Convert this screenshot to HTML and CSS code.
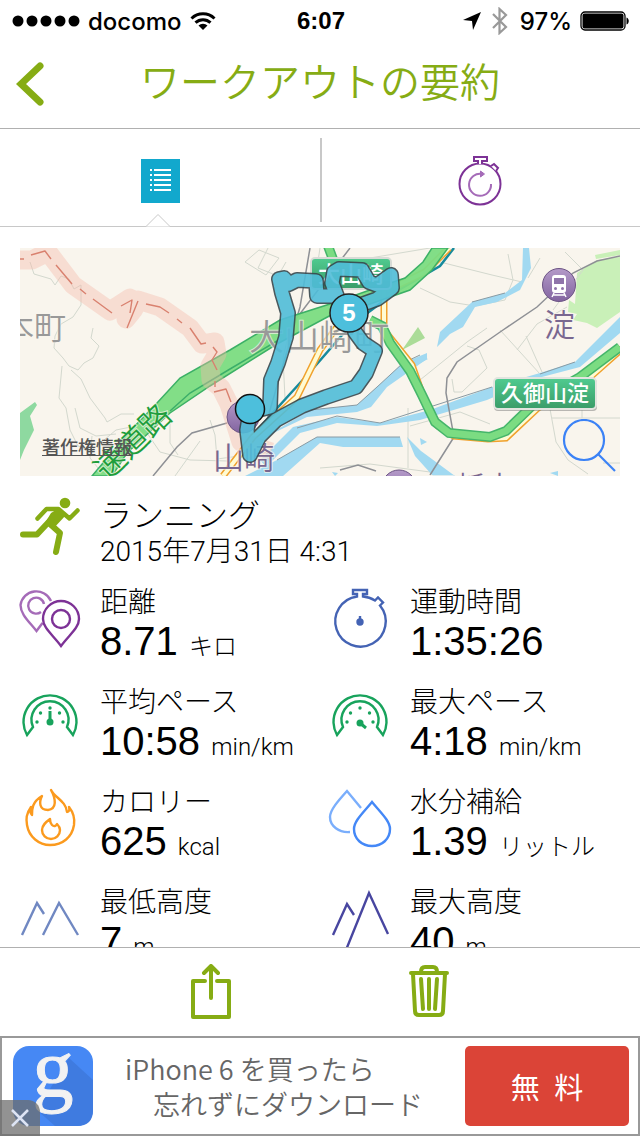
FILE: index.html
```html
<!DOCTYPE html>
<html lang="ja">

<head>
    <meta charset="UTF-8">
    <meta name="viewport" content="width=device-width, initial-scale=1.0">
    <title>ワークアウトの要約</title>
    <link rel="stylesheet" href="styles.css">
</head>

<body>

    <div class="status-bar">
        <div class="status-left">
            <svg width="68" height="12" viewBox="0 0 68 12">
                <circle cx="6" cy="6" r="5.500" /><circle cx="20" cy="6" r="5.500" /><circle cx="34" cy="6" r="5.500" /><circle cx="48" cy="6" r="5.500" /><circle cx="62" cy="6" r="5.500" />
            </svg>
            <span>docomo</span>
            <svg width="26" height="20" viewBox="0 0 26 20" fill="none" stroke="#000" stroke-width="3">
                <path d="M1.500 7.500a16.500 16.500 0 0 1 23 0M5.500 11.700a11 11 0 0 1 15 0" />
                <path d="M13 19l-4.500-4.500a6.500 6.500 0 0 1 9 0z" fill="#000" stroke="none" />
            </svg>
        </div>
        <strong class="status-time">6:07</strong>
        <div class="status-right">
            <svg width="20" height="20" viewBox="0 0 20 20"><path d="M19 1L11 19l-1-9-9-1z" /></svg>
            <svg width="22" height="28" viewBox="-1 0 22 28" fill="none" stroke="#999" stroke-width="2.200"><path d="M2 7l13 13-6.500 6V2L15 8 2 21" /></svg>
            <span>97%</span>
            <svg width="50" height="20" viewBox="0 0 50 20">
                <rect x="1" y="1" width="44" height="18" rx="4" fill="none" stroke="#000" stroke-width="1.300" />
                <rect x="2.500" y="2.500" width="41" height="15" rx="2" />
                <path d="M46.500 6.500c3 1 3 6 0 7z" />
            </svg>
        </div>
    </div>

    <header>
        <button class="back" aria-label="戻る">
            <svg width="28" height="44" viewBox="0 0 28 44" fill="none" stroke="#86ac14" stroke-width="7" stroke-linecap="round"><path d="M24 4L5 22l19 18" stroke-linejoin="miter" /></svg>
        </button>
        <h1>ワークアウトの要約</h1>
    </header>

    <nav>
        <button class="tab active" aria-label="概要">
            <svg width="40" height="44" viewBox="0 0 40 44">
                <rect x="1" y="0" width="39" height="44" fill="#12a8cd" />
                <path d="M10 11h2M10 16h2M10 21h2M10 26h2M10 31h2M14 11h17M14 16h17M14 21h17M14 26h17M14 31h17" stroke="#fff" stroke-width="2.200" />
            </svg>
            <svg class="caret" width="26" height="14" viewBox="0 0 26 14"><path d="M1 13.500L13 1.500l12 12" fill="#fff" stroke="#c8c8c8" /></svg>
        </button>
        <button class="tab" aria-label="ラップ">
            <svg width="44" height="50" viewBox="0 0 44 50" fill="none" stroke="#7d3296" stroke-width="2">
                <circle cx="22" cy="28" r="20.500" />
                <path d="M20 8V5h-4V1h13v4h-5v3M33 10l3-2 4 4-2 3" fill="#fff" />
                <g stroke="#a56bb8"><path d="M33 28a11 11 0 1 1-9-10" /><path d="M22.500 15l4 3-4 3z" fill="#a56bb8" stroke-width="1" /></g>
            </svg>
        </button>
    </nav>

    <main>
        <div class="map">
            <svg viewBox="0 0 600 228" preserveAspectRatio="xMidYMid slice">
                <defs>
                    <linearGradient id="sign" x1="0" y1="0" x2="0" y2="1"><stop offset="0" stop-color="#50cb90" /><stop offset="1" stop-color="#3a9c68" /></linearGradient>
                    <linearGradient id="station" x1="0" y1="0" x2="0" y2="1"><stop offset="0" stop-color="#b49ac8" /><stop offset="1" stop-color="#8264a0" /></linearGradient>
                </defs>
                <rect width="600" height="228" fill="#f9f5ed" />

                <!-- parks -->
                <path d="M557 25l20-13 23-3v55l-23 16-10-5-14-3 4-6-9-2 1-12 6 4z" fill="#c9f0b8" />
                <path d="M575 7l25-5v5l-24 4z" fill="#c9f0b8" />
                <path d="M0 165l15-11 2 3-7 11 4 14-10 20-4 10z" fill="#8ed9a0" />
                <path d="M382 102l16-23 7 11z" fill="#abdc98" />

                <!-- minor roads -->
                <g fill="none" stroke="#d3d8ce">
                    <path d="M10 14l4 12 17 5 4 6 6-9 8 3 5 10 7-4v20l-8 12-12 7-6 12-1 12 9 10 6 8 9 4 6-7 9-5 6-12-8-8 2-10" />
                    <path d="M42 118l-3 32 7 10 4 22 8 16 14 4 24-20 20-4 12 5M51 122l10 9 9 19 15 20 2 4 14-8h13" />
                    <path d="M55 160l5 20 16 8 20-2M72 188l-2 22 8 10M125 182l15 22 30 8 38 1M150 175v20l8 12M155 228l25-35M190 172l5 15 2 24 60-8" />
                    <path d="M225 14l14-12 20 8-13 17zM248 0l-10 20 20 8 8-14M300 0l-3 20 18-4M270 80l-7 30 2 40M350 10l60-10M420 14l52 13 30 7M400 40l30 14 25 4 30-6 8-20-5-26" />
                    <path d="M520 10l-12 20M480 82l40 44M497 102l20-26 30-17M432 131l2 13h8l25-24-8-18-12-4M467 80l-20 14-47 38M506 88l16 36M528 150l8 44 12 18 20 14M532 170h68M583 215h17M562 152v18M388 160v60M390 178l50-14 30 12M545 4l18 18-30 40M300 220l50-4 60 8" />
                </g>

                <!-- rivers -->
                <g fill="#a1d9f1">
                    <path d="M407 105l-24 10-26 24-20 18-47 5-47 28 44-21 50-5 14-5 16-20 40-28z" />
                    <path d="M240 212l33-33 44-10 43 6 50-13 62-23 48-14 35-11 45-45v16l-40 34-42 11-51 22-67 20-43 6-40-3-37 10-34 34z" />
                    <path d="M225 228l32-16 40-23h83l3 10h-60l-23-4-37 33z" />
                    <path d="M387 189l14 14 34 25h-22l-18-20z" />
                    <path d="M503 0h6l2 20-11 22-23 12-22 5-12 20-13 7-13 13 3-15 32-30 33-9 17-13zM400 108l8 3-8 4zM400 190l7 4-6 3zM312 224l6 1-3 3zM530 225l8-2v5z" />
                </g>
                <path d="M277 180l40-12 43 7 112-36M520 126l35-12M452 54l33-9M257 212l40-23h83M400 107l-17 8-26 24-20 18-47 5" fill="none" stroke="#899ba4" />

                <!-- railways -->
                <path d="M600 8l-23 5-24 12-36 34-34 23-46 32-10 16-1 15 8 44-24 38M133 228l24-29 15-14 35-10M290 0l-10 59-35 120M330 0l-57 75M320 222l18-5 18 6" fill="none" stroke="#8e9095" stroke-width="1.500" />

                <!-- highways -->
                <g fill="none">
                    <path d="M434 0l-14 18-43 25-47 35-40 46-50 55-37 46" stroke="#168a9c" stroke-width="2.500" />
                    <path d="M429 0l-24 24-54 26-34 29-17 23-23 47-44 40-30 39" stroke="#f0a12c" stroke-width="7" />
                    <path d="M429 0l-24 24-54 26-34 29-17 23-23 47-44 40-30 39" stroke="#fffbd2" stroke-width="4" />
                    <path d="M364 42v40l28 35 14 40 12 21 16 10 34 3 18-1 32-30 50-29 36-32" stroke="#f0a12c" stroke-width="7" />
                    <path d="M364 42v40l28 35 14 40 12 21 16 10 34 3 18-1 32-30 50-29 36-32" stroke="#fffbd2" stroke-width="4" />
                </g>
                <path d="M72 228L110 183L137 155L160 130L210 102L260 72L313 55L350 42L385 30L403 14L412 0H428L412 22L390 42L350 56L313 66L257 96L190 138L150 165L107 205L92 228z" fill="#7bdc82" fill-opacity=".95" stroke="#3cb066" stroke-width="1.500" />
                <path d="M150 163l20-18 40-24 47-28" fill="none" stroke="#3cae6a" stroke-width="1.500" />
                <path d="M350 72l12 6 8 17 20 28 12 24 13 27 14 11 41 4 16-6 30-29 44-25 40-30M308-2l6 16" fill="none" stroke="#45b56a" stroke-width="10" />
                <path d="M350 72l12 6 8 17 20 28 12 24 13 27 14 11 41 4 16-6 30-29 44-25 40-30M308-2l6 16" fill="none" stroke="#7bdc82" stroke-width="7" />

                <!-- administrative border -->
                <g fill="none" stroke-linejoin="round">
                    <path d="M0 12h12L28 4l25 33 37 26 20-13-4 21 8-10 4-9 22 7 30 21 12 16 13-2 2 12-7 12 1 14 10 8 8 16 12 38 30 10" stroke="#f6b9a9" stroke-opacity=".4" stroke-width="19" />
                    <path d="M0 11h4M11 7l14-4 6 8M36 17l16 19M60 41l6 5M73 51l19 14M101 58l11-6-2 13M118 53l-11 27M126 56l14 3 9 6M157 71l5 4M170 80l11 16 5-1M193 99l4 5-5 8 5 10M195 139v-6M194 144l12-3 5 13" stroke="#d9816f" stroke-width="1.400" />
                </g>

                <!-- place names -->
                <g class="map-label">
                    <text x="-18" y="91" font-size="32" fill="#999">本町</text>
                    <text x="229" y="102" font-size="35" fill="#999">大山崎町</text>
                    <text x="524" y="88" font-size="31" fill="#796790">淀</text>
                    <text x="407" y="250" font-size="29" fill="#796790">三栃木</text>
                    <text x="0" y="0" font-size="31" fill="#1f9e3c" transform="translate(87 234) rotate(-44)">速道路</text>
                </g>

                <g>
                    <circle cx="539" cy="37" r="16.500" fill="url(#station)" stroke="#6c5484" />
                    <rect x="532" y="27" width="14" height="18" rx="3" fill="#fff" />
                    <rect x="534" y="30" width="10" height="6" fill="#8f74aa" />
                    <circle cx="535.500" cy="40.500" r="1.500" fill="#8f74aa" /><circle cx="542.500" cy="40.500" r="1.500" fill="#8f74aa" />
                    <path d="M534 45l-2 4M544 45l2 4M533 47h12" stroke="#fff" stroke-width="1.500" />
                    <circle cx="223" cy="169" r="16" fill="url(#station)" stroke="#6c5484" />
                    <circle cx="379" cy="239" r="17" fill="url(#station)" stroke="#6c5484" />
                </g>
                <text class="map-label" x="193" y="221" font-size="31" fill="#796790">山崎</text>

                <rect x="291" y="10" width="80" height="31" rx="4" fill="url(#sign)" stroke="#d8dbd6" stroke-width="2" />
                <text class="map-label sign" x="298" y="34" font-size="22">大山崎</text>
                <rect x="474" y="131" width="103" height="32" rx="4" fill="#777" opacity=".5" />
                <rect x="474" y="130" width="102" height="31" rx="4" fill="url(#sign)" stroke="#e2e4df" stroke-width="2" />
                <text class="map-label sign" x="481" y="153" font-size="22">久御山淀</text>

                <!-- workout route -->
                <g fill="none" stroke-linecap="round" stroke-linejoin="round" opacity=".9">
                    <path d="M230 207l-3-25 3-18 20-5 1-27 7-17 8-26 2-24-6-20-3-14 5-1 5 6 8-4 19 1 1 15h20l-5-13 2-11 5-3 23 1 7 12 8 3 14-10 1 13-15 11-28 10 6 23 8 11 12 8-9 22-10 14-30 10-24 9-26 14-17 17-9 18" stroke="#38484e" stroke-width="16" />
                    <path d="M230 207l-3-25 3-18 20-5 1-27 7-17 8-26 2-24-6-20-3-14 5-1 5 6 8-4 19 1 1 15h20l-5-13 2-11 5-3 23 1 7 12 8 3 14-10 1 13-15 11-28 10 6 23 8 11 12 8-9 22-10 14-30 10-24 9-26 14-17 17-9 18" stroke="#50bdd9" stroke-width="13" />
                </g>
                <circle cx="230" cy="161" r="14.500" fill="#4dbfdc" stroke="#111" stroke-width="1.500" />
                <circle cx="329" cy="65" r="19" fill="#4dbfdc" stroke="#222" stroke-width="1.500" />
                <text class="marker" x="329" y="73" text-anchor="middle">5</text>
            </svg>
            <a class="legal" href="#">著作権情報</a>
            <button class="zoom" aria-label="地図を拡大">
                <svg width="54" height="54" viewBox="0 0 54 54" fill="none" stroke="#3b82f6" stroke-width="2.200"><circle cx="22" cy="21" r="20" /><path d="M36 35l17 17" /></svg>
            </button>
        </div>

        <section class="summary">
            <svg class="icon" viewBox="0 0 60 60" fill="none" stroke="#86ac14" stroke-width="6" stroke-linecap="round" stroke-linejoin="round">
                <circle cx="45" cy="7" r="5.300" fill="#86ac14" stroke="none" />
                <path d="M17.500 22.500l9-9.500h12l11 9.500 8-8" stroke-width="4.500" />
                <path d="M39 12l7 7-13 14-8-6 6-10z" fill="#86ac14" stroke="none" />
                <path d="M3 38.500h14l14-15M30 28l10 9-4 19" />
            </svg>
            <div>
                <h2>ランニング</h2>
                <p class="date">2015年7月31日 4:31</p>
            </div>
        </section>

        <section class="stats">
            <div class="stat">
                <svg class="icon" viewBox="0 0 60 60" fill="none" stroke="#7d3296">
                    <g stroke="#a56bb8"><path d="M31 13A16 16 0 0 0 0.500 17c0 9 8 16 16 26l6-8" /><path d="M24 16a8 8 0 1 0-3 8" /></g>
                    <path d="M41 58C33 47 23 40 23 31a18 18 0 0 1 36 0c0 9-10 16-18 27z" />
                    <circle cx="41" cy="31" r="9" />
                </svg>
                <div><h3>距離</h3><p class="value">8.71 <small>キロ</small></p></div>
            </div>
            <div class="stat">
                <svg class="icon" viewBox="0 0 60 60" fill="none" stroke="#4463b4">
                    <path d="M27 8.500V6h-4V2h14v4h-4v2.500a25 25 0 0 1 12 4l3-3 5 5-3 3A25.200 25.200 0 1 1 27 8.500z" />
                    <circle cx="30" cy="34" r="2.500" fill="#4463b4" /><path d="M30 34v-6" />
                </svg>
                <div><h3>運動時間</h3><p class="value">1:35:26</p></div>
            </div>
            <div class="stat">
                <svg class="icon" viewBox="0 0 60 60" fill="none" stroke="#18a35c">
                    <path d="M7 47A26.500 26.500 0 1 1 53 47l-6-8A18.500 18.500 0 1 0 13 39z" />
                    <path d="M30 34V23" stroke-width="3" />
                    <g fill="#18a35c" stroke="none"><circle cx="30" cy="34" r="3.500" /><circle cx="17" cy="34" r="1.700" /><circle cx="43" cy="34" r="1.700" /><circle cx="20.500" cy="25" r="1.700" /><circle cx="39.500" cy="25" r="1.700" /><circle cx="30" cy="20" r="1.700" /></g>
                </svg>
                <div><h3>平均ペース</h3><p class="value">10:58 <small>min/km</small></p></div>
            </div>
            <div class="stat">
                <svg class="icon" viewBox="0 0 60 60" fill="none" stroke="#18a35c">
                    <path d="M7 47A26.500 26.500 0 1 1 53 47l-6-8A18.500 18.500 0 1 0 13 39z" />
                    <path d="M30 35l6 5" stroke-width="3" />
                    <g fill="#18a35c" stroke="none"><circle cx="30" cy="35" r="3.500" /><circle cx="17" cy="34" r="1.700" /><circle cx="43" cy="34" r="1.700" /><circle cx="20.500" cy="25" r="1.700" /><circle cx="39.500" cy="25" r="1.700" /><circle cx="30" cy="20" r="1.700" /></g>
                </svg>
                <div><h3>最大ペース</h3><p class="value">4:18 <small>min/km</small></p></div>
            </div>
            <div class="stat">
                <svg class="icon" viewBox="0 0 60 60" fill="none" stroke="#fb9a1e" stroke-linejoin="round">
                    <path d="M11 19C6 26 6 31 7 37c2 12 12 20 23 20 13 0 22-8 24-20 1-7-1-13-5-18 1 3 0 5-2 5-1-11-12-14-16-22 5 9 6 19-3 20-9 0-9-8-6-14-10 6-10 13-10 19-2-2-2-5-1-8z" />
                    <path d="M30 31c-4 3-8 6-8 11a9 9 0 0 0 18 0c0-2-1-4-3-6-1 2-3 3-5 1-2-2-2-4-2-6z" />
                </svg>
                <div><h3>カロリー</h3><p class="value">625 <small>kcal</small></p></div>
            </div>
            <div class="stat">
                <svg class="icon" viewBox="0 0 60 60" fill="none" stroke="#4488f7">
                    <path d="M31 20L17 3C8 13 0 22 0 29c0 9 9 16 20 15" stroke="#7aaefc" />
                    <path d="M42 14c9 11 18 19 18 27 0 10-8 17-18 17s-18-7-18-17c0-8 9-16 18-27z" />
                </svg>
                <div><h3>水分補給</h3><p class="value">1.39 <small>リットル</small></p></div>
            </div>
            <div class="stat">
                <svg class="icon" viewBox="0 0 60 60" fill="none" stroke="#7088c2"><path d="M2 47l15-32 7 11M23 47l16-32 19 32" /></svg>
                <div><h3>最低高度</h3><p class="value">7 <small>m</small></p></div>
            </div>
            <div class="stat">
                <svg class="icon" viewBox="0 0 60 60" fill="none" stroke="#4846a0"><path d="M3 47l14-31 7 11M16 62L39 5l19 41" /></svg>
                <div><h3>最大高度</h3><p class="value">40 <small>m</small></p></div>
            </div>
        </section>
    </main>

    <div class="toolbar">
        <button aria-label="共有">
            <svg width="40" height="56" viewBox="0 0 40 56" fill="none" stroke="#86ac14" stroke-width="4" stroke-linecap="round" stroke-linejoin="round"><path d="M14 17H2v36h36V17H26M20 34V2M13 9l7-7 7 7" /></svg>
        </button>
        <button aria-label="削除">
            <svg width="40" height="56" viewBox="0 0 40 56" fill="none" stroke="#86ac14" stroke-width="4" stroke-linecap="round" stroke-linejoin="round"><path d="M2 9h36M4 10l2 37q0 4 4 4h20q4 0 4-4l2-37M12 8q0-5 4-5h8q4 0 4 5M12 15l2 30M20 15v30M28 15l-2 30" /></svg>
        </button>
    </div>

    <aside class="ad">
        <svg class="ad-logo" width="80" height="80" viewBox="0 0 80 80">
            <rect width="80" height="80" rx="16" fill="#4688f4" />
            <path d="M56 12l24 22v30q0 16-16 16H42L24 64z" fill="#3f7be0" />
            <text x="40" y="50" text-anchor="middle">g</text>
        </svg>
        <p class="ad-text"><span>iPhone 6 を買ったら</span><span class="indent">忘れずにダウンロード</span></p>
        <button class="ad-button">無&ensp;料</button>
        <button class="ad-close" aria-label="広告を閉じる">
            <svg width="18" height="18" viewBox="0 0 18 18" stroke="#dde4f4" stroke-width="2.500"><path d="M1 1l16 16M17 1L1 17" /></svg>
        </button>
    </aside>

</body>

</html>
```
FILE: styles.css
```css
* {
    box-sizing: border-box;
}

body {
    display: flex;
    flex-direction: column;
    height: 100vh;
    margin: 0;
    background-color: white;
    color: black;
    font-family: Roboto, "Noto Sans CJK JP", sans-serif;
    font-weight: 300;
}

h1, h2, h3, p {
    margin: 0;
    font-weight: 300;
}

button {
    padding: 0;
    border: none;
    background: none;
    font-family: inherit;
    cursor: pointer;
}

svg {
    display: block;
    flex: none;
}

/* Status bar */
.status-bar {
    display: grid;
    grid-template-columns: 1fr auto 1fr;
    align-items: center;
    height: 40px;
    padding: 2px 10px 0 12px;
    font-family: Inter, "Liberation Sans", sans-serif;
    font-size: 24px;
    font-weight: 500;
}

.status-left,
.status-right {
    display: flex;
    align-items: center;
    gap: 8px;
}

.status-right {
    justify-content: flex-end;
}

.status-time {
    font-family: "Liberation Sans", sans-serif;
    font-weight: bold;
}

/* Title */
header {
    display: grid;
    grid-template-columns: 1fr auto 1fr;
    align-items: center;
    height: 89px;
    padding: 0 16px;
    border-bottom: 1px solid #b0b0b0;
}

.back {
    justify-self: start;
}

h1 {
    color: #86ac14;
    font-size: 40px;
    font-weight: 350;
    line-height: 48px;
}

/* Tabs */
nav {
    display: flex;
    height: 98px;
    border-bottom: 1px solid #c8c8c8;
}

.tab {
    position: relative;
    display: flex;
    flex: 1;
    align-items: center;
    justify-content: center;
    padding-top: 6px;
}

.tab.active::after {
    content: "";
    position: absolute;
    right: -2px;
    top: 9px;
    bottom: 4px;
    width: 2px;
    background-color: #c8c8c8;
}

.caret {
    position: absolute;
    left: calc(50% - 15px);
    bottom: -1px;
}

/* Content */
main {
    flex: 1;
    min-height: 0;
    padding: 21px 20px 0;
    overflow-y: auto;
    scrollbar-width: none;
}

.map {
    position: relative;
    height: 228px;
    overflow: hidden;
}

.map > svg {
    width: 100%;
    height: 100%;
}

.map-label {
    font-family: "Noto Sans CJK JP", sans-serif;
    font-weight: 350;
    stroke: #f9f5ed;
    stroke-width: 2px;
    stroke-opacity: 0.7;
    paint-order: stroke;
}

.sign {
    fill: white;
    font-weight: 500;
    stroke: none;
}

.marker {
    fill: white;
    font-family: "Liberation Sans", sans-serif;
    font-size: 24px;
    font-weight: bold;
}

.legal {
    position: absolute;
    left: 22px;
    bottom: 16px;
    color: #555;
    font-size: 18px;
    font-weight: 500;
    line-height: 24px;
}

.zoom {
    position: absolute;
    right: 4px;
    bottom: 3px;
}

.icon {
    width: 60px;
    height: 60px;
    overflow: visible;
}

.summary {
    display: flex;
    gap: 20px;
    margin-top: 20px;
}

h2 {
    font-size: 32px;
    line-height: 40px;
}

.date {
    font-size: 28px;
    line-height: 32px;
}

.stats {
    display: grid;
    grid-template-columns: 1fr 1fr;
    margin: 17px -20px 0 0;
}

.stat {
    display: flex;
    gap: 20px;
    height: 100px;
}

.stat .icon {
    margin-top: 3px;
    stroke-width: 2.4;
}

h3 {
    font-size: 28px;
    line-height: 36px;
}

.value {
    font-family: "Liberation Sans", sans-serif;
    font-size: 40px;
    font-weight: 400;
    line-height: 40px;
}

.value small {
    font-family: Roboto, "Noto Sans CJK JP", sans-serif;
    font-size: 24px;
    font-weight: 300;
}

/* Bottom toolbar */
.toolbar {
    display: flex;
    justify-content: center;
    gap: 178px;
    height: 89px;
    align-items: center;
    border-top: 1px solid #b0b0b0;
}

/* Ad banner */
.ad {
    position: relative;
    display: flex;
    align-items: center;
    height: 100px;
    padding: 0 9px 0 11px;
    border: 2px solid #999;
}

.ad-logo text {
    fill: #f2f2f2;
    stroke: #f2f2f2;
    font-family: "Liberation Serif", serif;
    font-size: 82px;
}

.ad-text {
    flex: 1;
    padding-left: 32px;
    color: #666;
    font-family: "Noto Sans CJK JP", sans-serif;
    font-size: 27px;
    font-weight: 350;
    line-height: 35px;
    white-space: nowrap;
}

.ad-text span {
    display: block;
}

.ad-text .indent {
    padding-left: 28px;
}

.ad-button {
    width: 164px;
    height: 80px;
    border-radius: 5px;
    background-color: #db4437;
    color: white;
    font-family: "Noto Sans CJK JP", sans-serif;
    font-size: 29px;
}

.ad-close {
    position: absolute;
    left: -2px;
    bottom: -2px;
    display: flex;
    align-items: center;
    justify-content: center;
    width: 40px;
    height: 36px;
    border-radius: 0 12px 0 0;
    background-color: rgba(110, 110, 110, 0.75);
}
```
